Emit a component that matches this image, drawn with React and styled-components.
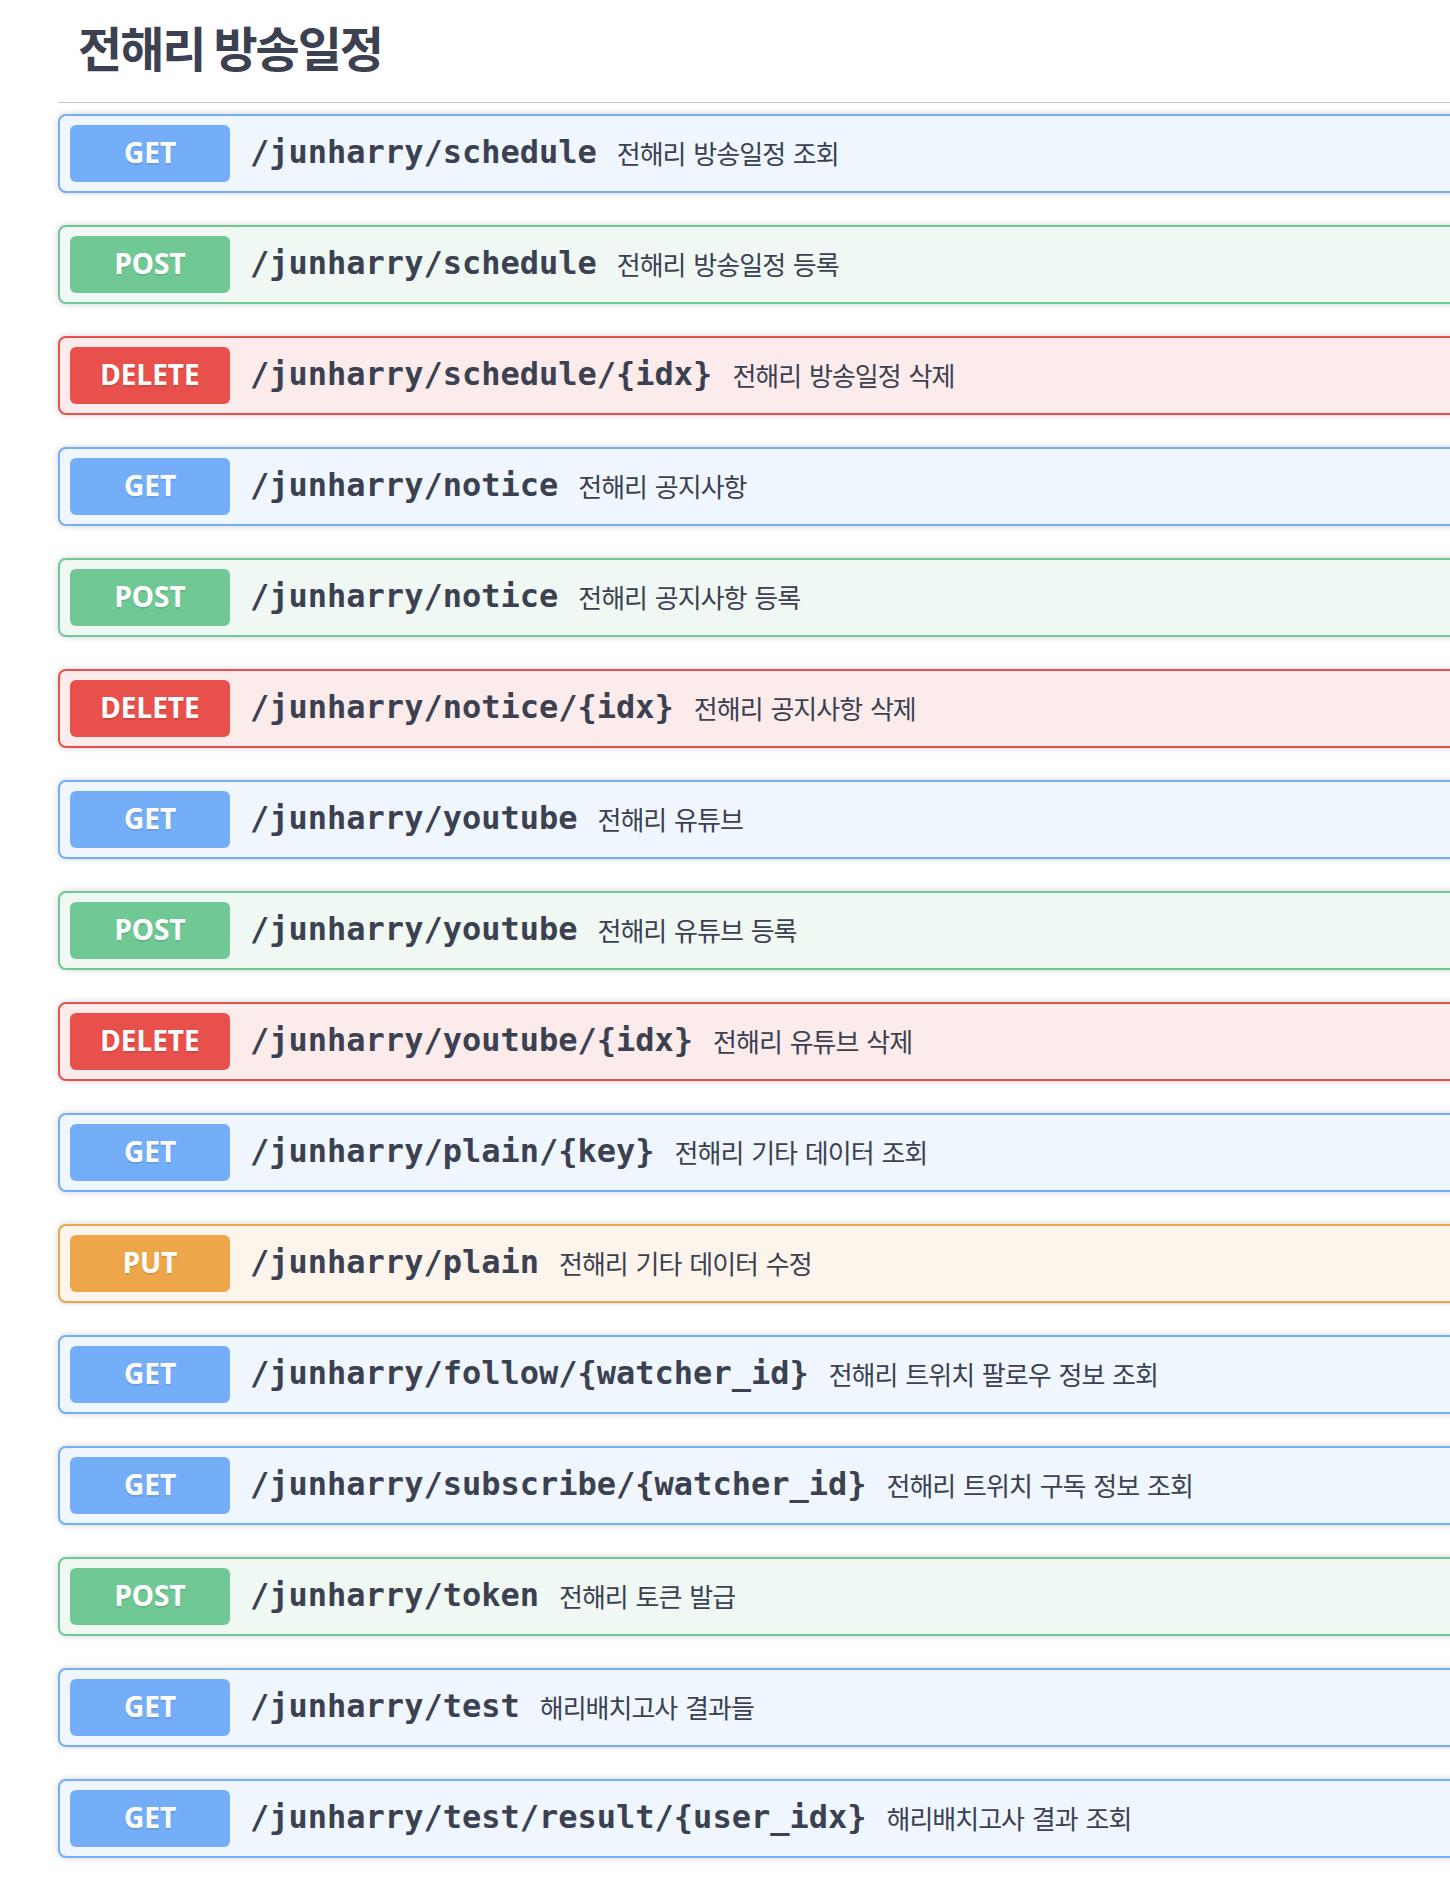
import React from 'react'
import styled, {createGlobalStyle} from 'styled-components'

const Global = createGlobalStyle`
  html, body {
    margin: 0;
    padding: 0;
    background: #ffffff;
    overflow: hidden;
  }
  body {
    font-family: "Noto Sans", "Noto Sans CJK KR", sans-serif;
    color: #3b4151;
  }
`

const methods = {
  GET: {main: '#74aef8', bg: '#eff6fe'},
  POST: {main: '#70c995', bg: '#eff8f3'},
  DELETE: {main: '#e8504b', bg: '#fcebeb'},
  PUT: {main: '#eea64a', bg: '#fdf5ec'},
}

const Section = styled.section`
  margin-left: 58px;
  width: calc(100% - 18px);
`

const TagTitle = styled.h3`
  margin: 0 0 11px;
  padding: 17px 20px 27px;
  font-family: "Noto Sans CJK KR", sans-serif;
  font-size: 48px;
  line-height: 58px;
  font-weight: 700;
  letter-spacing: -2px;
  color: #3b4151;
  border-bottom: 1px solid rgba(59, 65, 81, 0.3);
`

const Block = styled.div`
  display: flex;
  align-items: center;
  margin: 0 0 32px;
  padding: 9px 10px;
  border: 2px solid ${p => methods[p.$method].main};
  border-radius: 8px;
  background: ${p => methods[p.$method].bg};
  box-shadow: 0 0 6px rgba(0, 0, 0, 0.19);
`

const Method = styled.span`
  flex: none;
  box-sizing: border-box;
  width: 160px;
  height: 57px;
  padding-bottom: 4px;
  display: flex;
  align-items: center;
  justify-content: center;
  border-radius: 6px;
  background: ${p => methods[p.$method].main};
  color: #fff;
  font-family: "Noto Sans", sans-serif;
  font-size: 28px;
  font-weight: 700;
  text-shadow: 0 2px 0 rgba(0, 0, 0, 0.1);
`

const Path = styled.span`
  padding: 0 20px 3px;
  font-family: "DejaVu Sans Mono", monospace;
  font-size: 32px;
  font-weight: 700;
  color: #3b4151;
`

const Description = styled.span`
  padding-bottom: 3px;
  font-family: "Noto Sans CJK KR", sans-serif;
  font-size: 26px;
  letter-spacing: -1px;
  word-spacing: 3px;
  color: #3b4151;
`

const endpoints = [
  ['GET', '/junharry/schedule', '전해리 방송일정 조회'],
  ['POST', '/junharry/schedule', '전해리 방송일정 등록'],
  ['DELETE', '/junharry/schedule/{idx}', '전해리 방송일정 삭제'],
  ['GET', '/junharry/notice', '전해리 공지사항'],
  ['POST', '/junharry/notice', '전해리 공지사항 등록'],
  ['DELETE', '/junharry/notice/{idx}', '전해리 공지사항 삭제'],
  ['GET', '/junharry/youtube', '전해리 유튜브'],
  ['POST', '/junharry/youtube', '전해리 유튜브 등록'],
  ['DELETE', '/junharry/youtube/{idx}', '전해리 유튜브 삭제'],
  ['GET', '/junharry/plain/{key}', '전해리 기타 데이터 조회'],
  ['PUT', '/junharry/plain', '전해리 기타 데이터 수정'],
  ['GET', '/junharry/follow/{watcher_id}', '전해리 트위치 팔로우 정보 조회'],
  ['GET', '/junharry/subscribe/{watcher_id}', '전해리 트위치 구독 정보 조회'],
  ['POST', '/junharry/token', '전해리 토큰 발급'],
  ['GET', '/junharry/test', '해리배치고사 결과들'],
  ['GET', '/junharry/test/result/{user_idx}', '해리배치고사 결과 조회'],
]

export default function App() {
  return (
    <>
      <Global />
      <Section>
        <TagTitle>전해리 방송일정</TagTitle>
        {endpoints.map(([method, path, desc], i) => (
          <Block key={i} $method={method}>
            <Method $method={method}>{method}</Method>
            <Path>{path}</Path>
            <Description>{desc}</Description>
          </Block>
        ))}
      </Section>
    </>
  )
}
